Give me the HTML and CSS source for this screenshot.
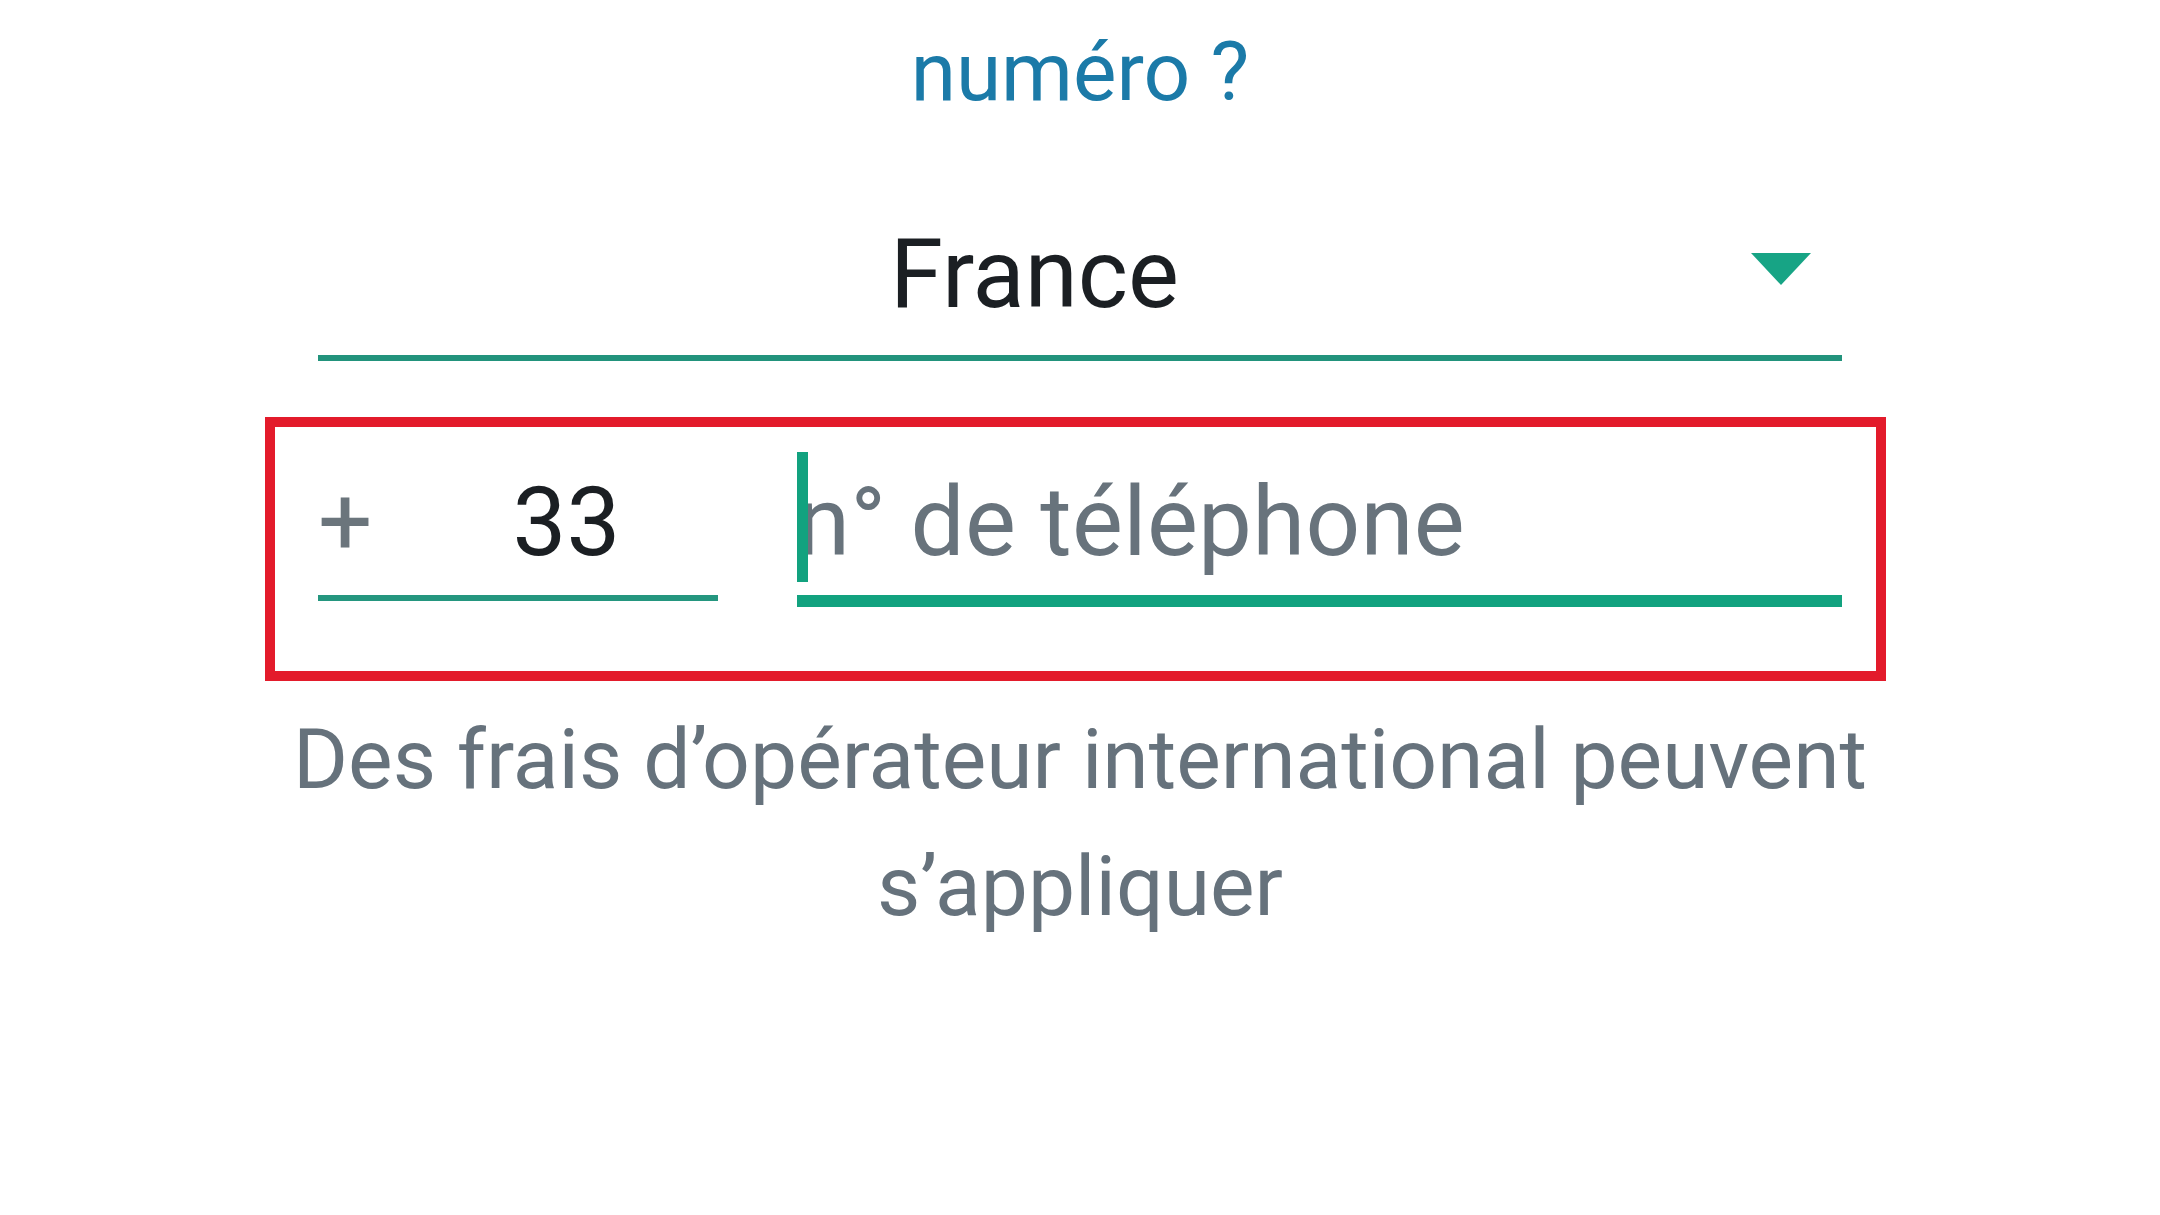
FILE: index.html
```html
<!DOCTYPE html>
<html lang="fr">
<head>
  <meta charset="UTF-8">
  <meta name="viewport" content="width=device-width, initial-scale=1">
  <title>Vérifier votre numéro</title>
  <link rel="stylesheet" href="styles.css">
</head>
<body>
  <main class="screen">
    <h1 class="titre">numéro ?</h1>

    <div class="pays">
      <span class="pays-nom">France</span>
      <svg class="pays-fleche" width="60" height="32" viewBox="0 0 60 32">
        <polygon points="0,0 60,0 30,32" fill="#17a485"/>
      </svg>
    </div>

    <div class="saisie">
      <div class="champ champ-code">
        <span class="plus">+</span>
        <span class="code">33</span>
      </div>
      <div class="champ champ-tel">
        <span class="curseur"></span>
        <span class="placeholder">n° de téléphone</span>
      </div>
    </div>

    <p class="note">Des frais d’opérateur international peuvent s’appliquer</p>
  </main>
</body>
</html>
```

FILE: styles.css
```css
* {
  box-sizing: border-box;
  margin: 0;
  padding: 0;
}

body {
  font-family: Roboto, "Noto Sans", sans-serif;
  background: #ffffff;
  color: #1b1f23;
}

.screen {
  width: 2160px;
  padding-top: 22px;
}

.titre {
  font-size: 82px;
  font-weight: 400;
  line-height: 100px;
  text-align: center;
  color: #1b7aa8;
}

/* liste déroulante du pays */
.pays {
  display: flex;
  align-items: center;
  width: 1524px;
  margin: 96px auto 0;
  padding: 0 31px 24px 0;
  border-bottom: 6px solid #22937c;
}

.pays-nom {
  flex: 1;
  text-align: center;
  font-size: 96px;
  line-height: 113px;
  color: #1b1f23;
}

.pays-fleche {
  display: block;
  margin-bottom: 12px;
}

/* indicatif + numéro */
.saisie {
  display: flex;
  align-items: flex-start;
  gap: 79px;
  width: 1621px;
  margin: 56px 0 0 265px;
  padding: 30px 34px 64px 43px;
  border: 10px solid #e31b2b;
}

.champ {
  font-size: 96px;
  line-height: 130px;
  padding-bottom: 8px;
}

.champ-code {
  display: flex;
  width: 400px;
  border-bottom: 6px solid #24967f;
}

.plus {
  color: #6b757c;
  font-size: 96px;
}

.code {
  margin-left: 140px;
  color: #1b1f23;
}

.champ-tel {
  position: relative;
  flex: 1;
  border-bottom: 12px solid #12a27f;
}

.curseur {
  position: absolute;
  left: 0;
  top: -5px;
  width: 11px;
  height: 130px;
  background: #12a27f;
}

.placeholder {
  color: #68737c;
  letter-spacing: 0.3px;
}

.note {
  width: 1640px;
  margin: 15px auto 0;
  font-size: 84px;
  line-height: 127px;
  text-align: center;
  color: #66727c;
}
```
